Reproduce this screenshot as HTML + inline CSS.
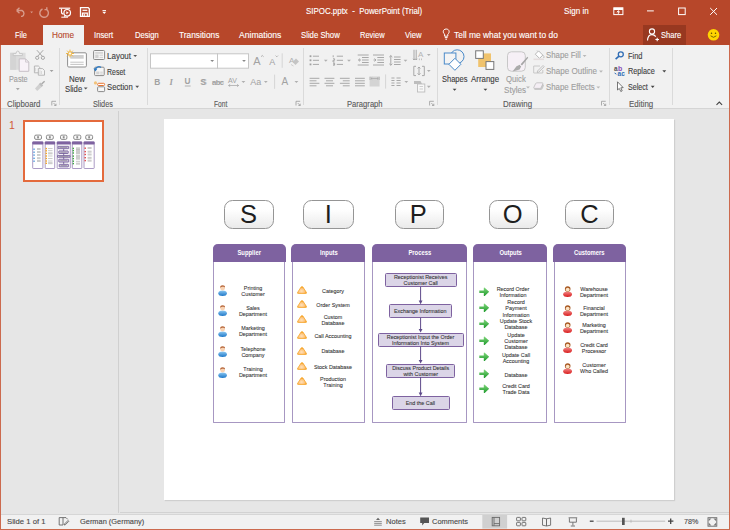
<!DOCTYPE html>
<html><head><meta charset="utf-8">
<style>
*{margin:0;padding:0;box-sizing:border-box}
html,body{width:730px;height:530px;overflow:hidden;background:#E6E6E6;font-family:"Liberation Sans",sans-serif;position:relative}
.a{position:absolute}
.t{position:absolute;line-height:1;white-space:pre;transform-origin:0 0;-webkit-text-stroke:0.12px currentColor}
#title{left:0;top:0;width:730px;height:45px;background:#B7472A}
#ribbon{left:1px;top:45px;width:728px;height:63px;background:#F1F1F1}
#rbline{left:1px;top:108px;width:728px;height:1px;background:#D5D5D5}
#divider{left:118px;top:111px;width:1px;height:402px;background:#D0D0D0}
#slide{left:164px;top:119px;width:510px;height:381px;background:#fff;box-shadow:1px 1px 1px #cfcfcf}
#status{left:1px;top:514px;width:728px;height:15px;background:#F1F1F1;border-top:1px solid #D6D6D6}
#bl{left:0;top:45px;width:1px;height:485px;background:#CC6A4E}
#br{left:729px;top:45px;width:1px;height:485px;background:#CC6A4E}
#bb{left:0;top:529px;width:730px;height:1px;background:#CC6A4E}
.w{color:#fff}
.tab{color:#fff;font-size:8.5px}
.rt{color:#444;font-size:8px}
.dis{color:#A8A8A8}
.gl{color:#666;font-size:8px}
.sep{position:absolute;width:1px;background:#DADADA}

.sc{position:absolute;left:0;top:0;width:510px;height:381px;font-family:"Liberation Sans",sans-serif}
.lb{position:absolute;top:80.9px;height:29.2px;border:1px solid #959595;border-radius:8.5px;background:linear-gradient(#FFFFFF 30%,#EAEAEA);font-size:25.5px;line-height:27.5px;text-align:center;color:#1E1E1E}
.col{position:absolute;top:124.7px;height:178.9px;border:1.2px solid #A797C2;border-top:none;border-radius:5px 5px 1px 1px}
.hd{position:absolute;left:-1.2px;right:-1.2px;top:0;height:18.3px;background:#7E62A0;border-radius:5px 5px 0 0;color:#fff;font-weight:bold;font-size:6.6px;line-height:18.3px;text-align:center}
.hd span{display:inline-block;transform:scaleX(0.89)}
.it{position:absolute;transform:translate(-50%,-50%) scaleX(0.9);text-align:center;font-size:6px;line-height:6.2px;color:#303030;white-space:nowrap;-webkit-text-stroke:0.08px #303030}
.ic{position:absolute;overflow:visible}
.pb2{position:absolute;background:#DBD5E7;border:1.2px solid #7E62A0;border-radius:1.5px;display:flex;align-items:center;justify-content:center;text-align:center;font-size:6px;line-height:6.1px;color:#303030;white-space:nowrap;-webkit-text-stroke:0.08px #303030}
.pb2 span{display:inline-block;transform:scaleX(0.9);position:relative;top:0.4px}
</style></head><body>
<div id="title" class="a"></div>
<div id="ribbon" class="a"></div>
<div id="rbline" class="a"></div>
<div id="divider" class="a"></div>

<svg width="0" height="0" style="position:absolute">
<defs>
 <linearGradient id="gb" x1="0" y1="0" x2="0" y2="1"><stop offset="0" stop-color="#8CC8F2"/><stop offset="1" stop-color="#1F78C8"/></linearGradient>
 <linearGradient id="gr" x1="0" y1="0" x2="0" y2="1"><stop offset="0" stop-color="#F28A8A"/><stop offset="1" stop-color="#D91E1E"/></linearGradient>
 <radialGradient id="gor" cx="0.45" cy="0.65" r="0.6"><stop offset="0" stop-color="#FFE2BC"/><stop offset="0.6" stop-color="#FDC27A"/><stop offset="1" stop-color="#F7A21B"/></radialGradient>
 <linearGradient id="go" x1="0" y1="0" x2="1" y2="0"><stop offset="0" stop-color="#F9B53A"/><stop offset="0.35" stop-color="#FDD3A6"/><stop offset="1" stop-color="#F7A418"/></linearGradient>
 <linearGradient id="gg" x1="0" y1="0" x2="0" y2="1"><stop offset="0" stop-color="#7FD67A"/><stop offset="1" stop-color="#1E9A2C"/></linearGradient>
 <symbol id="pb" viewBox="0 0 9.2 11.2">
  <path d="M0.3 8.3 C0.3 6.2 2 5.4 4.6 5.4 C7.2 5.4 8.9 6.2 8.9 8.3 C8.9 10.4 7.2 11 4.6 11 C2 11 0.3 10.4 0.3 8.3 Z" fill="url(#gb)"/>
  <circle cx="4.6" cy="2.9" r="2.5" fill="#F8D3B4"/>
  <path d="M2.1 2.8 C2 0.9 3.2 0.2 4.6 0.2 C6.2 0.2 7.2 1 7.1 2.6 C6.4 1.6 5 1.5 4.2 1.8 C3.3 2 2.6 2.3 2.1 2.8 Z" fill="#B86C42"/>
 </symbol>
 <symbol id="pr" viewBox="0 0 9.2 11">
  <path d="M0.2 8.2 C0.2 6.2 2 5.4 4.6 5.4 C7.2 5.4 9 6.2 9 8.2 C9 10.3 7.2 10.9 4.6 10.9 C2 10.9 0.2 10.3 0.2 8.2 Z" fill="url(#gr)"/>
  <circle cx="4.7" cy="3.1" r="2.8" fill="#A85A24"/>
  <circle cx="4.7" cy="3.6" r="1.9" fill="#FCE3C4"/>
 </symbol>
 <symbol id="tri" viewBox="0 0 10 7.4" preserveAspectRatio="none">
  <path d="M1.3 6.9 Q0.1 6.9 0.7 5.8 L3.9 1.2 Q5 -0.2 6.1 1.2 L9.3 5.8 Q9.9 6.9 8.7 6.9 Z" fill="url(#gor)" stroke="#F6A11E" stroke-width="0.7"/>
 </symbol>
 <symbol id="ga" viewBox="0 0 10.4 9.7">
  <path d="M0.3 3.6 H4.8 V1.2 Q4.8 0.2 5.7 0.8 L10.2 4.85 L5.7 8.9 Q4.8 9.5 4.8 8.5 V6.1 H0.3 Z" fill="url(#gg)"/>
 </symbol>
</defs>
</svg>
<div id="slide" class="a"><div class="sc"><div class="lb" style="left:60.3px;width:49.9px"><span style="position:relative;left:-0.8px">S</span></div>
<div class="lb" style="left:139.3px;width:50.4px"><span style="position:relative;left:-0.3px">I</span></div>
<div class="lb" style="left:231.4px;width:49.1px"><span style="position:relative;left:-1.6px">P</span></div>
<div class="lb" style="left:324.6px;width:49.5px"><span style="position:relative;left:-0.7px">O</span></div>
<div class="lb" style="left:400.9px;width:49.3px"><span style="position:relative;left:-0.2px">C</span></div>
<div class="col" style="left:48.7px;width:72.8px"><div class="hd"><span>Supplier</span></div></div>
<div class="col" style="left:127.6px;width:73.6px"><div class="hd"><span>Inputs</span></div></div>
<div class="col" style="left:208px;width:95.2px"><div class="hd"><span>Process</span></div></div>
<div class="col" style="left:309.4px;width:73.6px"><div class="hd"><span>Outputs</span></div></div>
<div class="col" style="left:389.5px;width:72.0px"><div class="hd"><span>Customers</span></div></div>
<svg class="ic" style="left:54.1px;top:165.9px" width="9.2" height="11.2"><use href="#pb"/></svg>
<div class="it" style="left:88.8px;top:171.50px">Printing<br>Customer</div>
<svg class="ic" style="left:54.1px;top:186.1px" width="9.2" height="11.2"><use href="#pb"/></svg>
<div class="it" style="left:88.8px;top:191.70px">Sales<br>Department</div>
<svg class="ic" style="left:54.1px;top:206.6px" width="9.2" height="11.2"><use href="#pb"/></svg>
<div class="it" style="left:88.8px;top:212.20px">Marketing<br>Department</div>
<svg class="ic" style="left:54.1px;top:227.4px" width="9.2" height="11.2"><use href="#pb"/></svg>
<div class="it" style="left:88.8px;top:233.00px">Telephone<br>Company</div>
<svg class="ic" style="left:54.1px;top:247.6px" width="9.2" height="11.2"><use href="#pb"/></svg>
<div class="it" style="left:88.8px;top:253.20px">Training<br>Department</div>
<svg class="ic" style="left:133.1px;top:166.80px" width="10" height="8"><use href="#tri"/></svg>
<div class="it" style="left:169px;top:171.50px">Category</div>
<svg class="ic" style="left:133.1px;top:181.20px" width="10" height="8"><use href="#tri"/></svg>
<div class="it" style="left:169px;top:185.90px">Order System</div>
<svg class="ic" style="left:133.1px;top:196.30px" width="10" height="8"><use href="#tri"/></svg>
<div class="it" style="left:169px;top:201.00px">Custom<br>Database</div>
<svg class="ic" style="left:133.1px;top:212.30px" width="10" height="8"><use href="#tri"/></svg>
<div class="it" style="left:169px;top:217.00px">Call Accounting</div>
<svg class="ic" style="left:133.1px;top:227.70px" width="10" height="8"><use href="#tri"/></svg>
<div class="it" style="left:169px;top:232.40px">Database</div>
<svg class="ic" style="left:133.1px;top:243.10px" width="10" height="8"><use href="#tri"/></svg>
<div class="it" style="left:169px;top:247.80px">Stock Database</div>
<svg class="ic" style="left:133.1px;top:258.20px" width="10" height="8"><use href="#tri"/></svg>
<div class="it" style="left:169px;top:262.90px">Production<br>Training</div>
<div class="pb2" style="left:220.6px;top:154.4px;width:72.1px;height:13.4px"><span>Receptionist Receives<br>Customer Call</span></div>
<div class="pb2" style="left:224.8px;top:185.2px;width:63.2px;height:13.6px"><span>Exchange Information</span></div>
<div class="pb2" style="left:213.7px;top:213.5px;width:86.0px;height:14.6px"><span>Receptionist Input the Order<br>Information Into System</span></div>
<div class="pb2" style="left:222.1px;top:244.6px;width:68.7px;height:14.2px"><span>Discuss Product Details<br>with Customer</span></div>
<div class="pb2" style="left:227.5px;top:277.2px;width:58.5px;height:13.4px"><span>End the Call</span></div>
<svg class="ic" style="left:0;top:0" width="510" height="381"><path d="M256.6 167.8 V182.2" stroke="#5E4A8A" stroke-width="1"/><path d="M254.7 181.6 H258.5 L256.6 185.2 Z" fill="#5E4A8A"/><path d="M256.6 198.8 V210.5" stroke="#5E4A8A" stroke-width="1"/><path d="M254.7 209.9 H258.5 L256.6 213.5 Z" fill="#5E4A8A"/><path d="M256.6 227.4 V241.6" stroke="#5E4A8A" stroke-width="1"/><path d="M254.7 241.0 H258.5 L256.6 244.6 Z" fill="#5E4A8A"/><path d="M256.6 258 V274.2" stroke="#5E4A8A" stroke-width="1"/><path d="M254.7 273.59999999999997 H258.5 L256.6 277.2 Z" fill="#5E4A8A"/></svg>
<svg class="ic" style="left:314.7px;top:168.2px" width="10.4" height="9.7"><use href="#ga"/></svg>
<svg class="ic" style="left:314.7px;top:183.7px" width="10.4" height="9.7"><use href="#ga"/></svg>
<svg class="ic" style="left:314.7px;top:199.7px" width="10.4" height="9.7"><use href="#ga"/></svg>
<svg class="ic" style="left:314.7px;top:217.0px" width="10.4" height="9.7"><use href="#ga"/></svg>
<svg class="ic" style="left:314.7px;top:233.1px" width="10.4" height="9.7"><use href="#ga"/></svg>
<svg class="ic" style="left:314.7px;top:250.1px" width="10.4" height="9.7"><use href="#ga"/></svg>
<svg class="ic" style="left:314.7px;top:265.4px" width="10.4" height="9.7"><use href="#ga"/></svg>
<div class="it" style="left:348.9px;top:172.80px">Record Order<br>Information</div>
<div class="it" style="left:351.5px;top:189.10px">Record<br>Payment<br>Information</div>
<div class="it" style="left:351.5px;top:205.10px">Update Stock<br>Database</div>
<div class="it" style="left:351.5px;top:221.80px">Update<br>Customer<br>Database</div>
<div class="it" style="left:351.5px;top:239.00px">Update Call<br>Accounting</div>
<div class="it" style="left:351.5px;top:255.50px">Database</div>
<div class="it" style="left:351.5px;top:270.10px">Credit Card<br>Trade Data</div>
<svg class="ic" style="left:398.8px;top:167.1px" width="9.2" height="11"><use href="#pr"/></svg>
<svg class="ic" style="left:398.8px;top:185.79999999999998px" width="9.2" height="11"><use href="#pr"/></svg>
<svg class="ic" style="left:398.8px;top:203.4px" width="9.2" height="11"><use href="#pr"/></svg>
<svg class="ic" style="left:398.8px;top:222.7px" width="9.2" height="11"><use href="#pr"/></svg>
<svg class="ic" style="left:398.8px;top:243.5px" width="9.2" height="11"><use href="#pr"/></svg>
<div class="it" style="left:430px;top:172.80px">Warehouse<br>Department</div>
<div class="it" style="left:430px;top:192.00px">Financial<br>Department</div>
<div class="it" style="left:430px;top:209.20px">Marketing<br>Department</div>
<div class="it" style="left:430px;top:228.60px">Credit Card<br>Processor</div>
<div class="it" style="left:430px;top:249.10px">Customer<br>Who Called</div></div></div>
<div class="a" style="left:22.6px;top:120.3px;width:81.2px;height:62.1px;border:2px solid #E46A3C;background:#fff"></div>
<svg class="a" style="left:0;top:110px" width="118" height="80" viewBox="0 110 118 80">
<rect x="34.6" y="135.1" width="6.90" height="4.3" rx="1.4" fill="#FAFAFA" stroke="#6A6A6A" stroke-width="0.75"/>
<rect x="37.15" y="136.2" width="1.8" height="2.2" fill="#444" opacity="0.6"/>
<rect x="46.4" y="135.1" width="6.90" height="4.3" rx="1.4" fill="#FAFAFA" stroke="#6A6A6A" stroke-width="0.75"/>
<rect x="48.95" y="136.2" width="1.8" height="2.2" fill="#444" opacity="0.6"/>
<rect x="60.5" y="135.1" width="6.40" height="4.3" rx="1.4" fill="#FAFAFA" stroke="#6A6A6A" stroke-width="0.75"/>
<rect x="62.80" y="136.2" width="1.8" height="2.2" fill="#444" opacity="0.6"/>
<rect x="73.7" y="135.1" width="7.10" height="4.3" rx="1.4" fill="#FAFAFA" stroke="#6A6A6A" stroke-width="0.75"/>
<rect x="76.35" y="136.2" width="1.8" height="2.2" fill="#444" opacity="0.6"/>
<rect x="85.7" y="135.1" width="6.90" height="4.3" rx="1.4" fill="#FAFAFA" stroke="#6A6A6A" stroke-width="0.75"/>
<rect x="88.25" y="136.2" width="1.8" height="2.2" fill="#444" opacity="0.6"/>
<rect x="32.70" y="142" width="10.20" height="26.5" rx="0.6" fill="#fff" stroke="#9582B6" stroke-width="0.8"/>
<rect x="32.3" y="141.4" width="11.00" height="3" rx="0.7" fill="#7E62A0"/>
<rect x="45.20" y="142" width="9.50" height="26.5" rx="0.6" fill="#fff" stroke="#9582B6" stroke-width="0.8"/>
<rect x="44.8" y="141.4" width="10.30" height="3" rx="0.7" fill="#7E62A0"/>
<rect x="57.20" y="142" width="13.10" height="26.5" rx="0.6" fill="#fff" stroke="#9582B6" stroke-width="0.8"/>
<rect x="56.8" y="141.4" width="13.90" height="3" rx="0.7" fill="#7E62A0"/>
<rect x="72.30" y="142" width="9.50" height="26.5" rx="0.6" fill="#fff" stroke="#9582B6" stroke-width="0.8"/>
<rect x="71.9" y="141.4" width="10.30" height="3" rx="0.7" fill="#7E62A0"/>
<rect x="84.00" y="142" width="10.20" height="26.5" rx="0.6" fill="#fff" stroke="#9582B6" stroke-width="0.8"/>
<rect x="83.6" y="141.4" width="11.00" height="3" rx="0.7" fill="#7E62A0"/>
<path d="M63.7 148.5 V164.5" stroke="#6B5394" stroke-width="0.8"/>
<rect x="58" y="146.3" width="10.70" height="2.40" rx="0.3" fill="#CFC5DF" stroke="#6B5394" stroke-width="0.8"/>
<rect x="59.50" y="147.10" width="7.70" height="0.8" fill="#666" opacity="0.5"/>
<rect x="58.8" y="150.9" width="9.40" height="2.60" rx="0.3" fill="#CFC5DF" stroke="#6B5394" stroke-width="0.8"/>
<rect x="60.30" y="151.80" width="6.40" height="0.8" fill="#666" opacity="0.5"/>
<rect x="57.5" y="155.4" width="12.50" height="1.90" rx="0.3" fill="#CFC5DF" stroke="#6B5394" stroke-width="0.8"/>
<rect x="59.00" y="155.95" width="9.50" height="0.8" fill="#666" opacity="0.5"/>
<rect x="58.8" y="159.2" width="9.90" height="2.90" rx="0.3" fill="#CFC5DF" stroke="#6B5394" stroke-width="0.8"/>
<rect x="60.30" y="160.25" width="6.90" height="0.8" fill="#666" opacity="0.5"/>
<rect x="59.2" y="164.3" width="9.20" height="2.60" rx="0.3" fill="#CFC5DF" stroke="#6B5394" stroke-width="0.8"/>
<rect x="60.70" y="165.20" width="6.20" height="0.8" fill="#666" opacity="0.5"/>
<rect x="33.4" y="148.5" width="1.3" height="1.4" fill="#3F8FD8"/>
<rect x="37.00" y="148.40" width="3.60" height="0.6" fill="#707070" opacity="0.6"/>
<rect x="37.00" y="149.40" width="3.60" height="0.6" fill="#707070" opacity="0.6"/>
<rect x="33.4" y="151.5" width="1.3" height="1.4" fill="#3F8FD8"/>
<rect x="37.00" y="151.40" width="3.60" height="0.6" fill="#707070" opacity="0.6"/>
<rect x="37.00" y="152.40" width="3.60" height="0.6" fill="#707070" opacity="0.6"/>
<rect x="33.4" y="154.4" width="1.3" height="1.4" fill="#3F8FD8"/>
<rect x="37.00" y="154.30" width="3.60" height="0.6" fill="#707070" opacity="0.6"/>
<rect x="37.00" y="155.30" width="3.60" height="0.6" fill="#707070" opacity="0.6"/>
<rect x="33.4" y="157.60000000000002" width="1.3" height="1.4" fill="#3F8FD8"/>
<rect x="37.00" y="157.50" width="3.60" height="0.6" fill="#707070" opacity="0.6"/>
<rect x="37.00" y="158.50" width="3.60" height="0.6" fill="#707070" opacity="0.6"/>
<rect x="33.4" y="160.5" width="1.3" height="1.4" fill="#3F8FD8"/>
<rect x="37.00" y="160.40" width="3.60" height="0.6" fill="#707070" opacity="0.6"/>
<rect x="37.00" y="161.40" width="3.60" height="0.6" fill="#707070" opacity="0.6"/>
<rect x="45.5" y="147.9" width="1.5" height="1.4" fill="#F5A623"/>
<rect x="48.05" y="148.30" width="4.50" height="0.6" fill="#707070" opacity="0.6"/>
<rect x="45.5" y="150.10000000000002" width="1.5" height="1.4" fill="#F5A623"/>
<rect x="48.05" y="150.50" width="4.50" height="0.6" fill="#707070" opacity="0.6"/>
<rect x="45.5" y="152.70000000000002" width="1.5" height="1.4" fill="#F5A623"/>
<rect x="48.05" y="152.60" width="4.50" height="0.6" fill="#707070" opacity="0.6"/>
<rect x="48.05" y="153.60" width="4.50" height="0.6" fill="#707070" opacity="0.6"/>
<rect x="45.5" y="155.3" width="1.5" height="1.4" fill="#F5A623"/>
<rect x="48.05" y="155.70" width="4.50" height="0.6" fill="#707070" opacity="0.6"/>
<rect x="45.5" y="157.8" width="1.5" height="1.4" fill="#F5A623"/>
<rect x="48.05" y="158.20" width="4.50" height="0.6" fill="#707070" opacity="0.6"/>
<rect x="45.5" y="160.3" width="1.5" height="1.4" fill="#F5A623"/>
<rect x="48.05" y="160.70" width="4.50" height="0.6" fill="#707070" opacity="0.6"/>
<rect x="45.5" y="162.60000000000002" width="1.5" height="1.4" fill="#F5A623"/>
<rect x="48.05" y="162.50" width="4.50" height="0.6" fill="#707070" opacity="0.6"/>
<rect x="48.05" y="163.50" width="4.50" height="0.6" fill="#707070" opacity="0.6"/>
<rect x="72.6" y="147.70000000000002" width="1.4" height="1.4" fill="#3DAA3F"/>
<rect x="76.00" y="147.60" width="4.00" height="0.6" fill="#707070" opacity="0.6"/>
<rect x="76.00" y="148.60" width="4.00" height="0.6" fill="#707070" opacity="0.6"/>
<rect x="72.6" y="149.9" width="1.4" height="1.4" fill="#3DAA3F"/>
<rect x="76.00" y="149.30" width="4.00" height="0.6" fill="#707070" opacity="0.6"/>
<rect x="76.00" y="150.30" width="4.00" height="0.6" fill="#707070" opacity="0.6"/>
<rect x="76.00" y="151.30" width="4.00" height="0.6" fill="#707070" opacity="0.6"/>
<rect x="72.6" y="152.3" width="1.4" height="1.4" fill="#3DAA3F"/>
<rect x="76.00" y="152.20" width="4.00" height="0.6" fill="#707070" opacity="0.6"/>
<rect x="76.00" y="153.20" width="4.00" height="0.6" fill="#707070" opacity="0.6"/>
<rect x="72.6" y="155.4" width="1.4" height="1.4" fill="#3DAA3F"/>
<rect x="76.00" y="154.80" width="4.00" height="0.6" fill="#707070" opacity="0.6"/>
<rect x="76.00" y="155.80" width="4.00" height="0.6" fill="#707070" opacity="0.6"/>
<rect x="76.00" y="156.80" width="4.00" height="0.6" fill="#707070" opacity="0.6"/>
<rect x="72.6" y="157.9" width="1.4" height="1.4" fill="#3DAA3F"/>
<rect x="76.00" y="157.80" width="4.00" height="0.6" fill="#707070" opacity="0.6"/>
<rect x="76.00" y="158.80" width="4.00" height="0.6" fill="#707070" opacity="0.6"/>
<rect x="72.6" y="160.5" width="1.4" height="1.4" fill="#3DAA3F"/>
<rect x="76.00" y="160.90" width="4.00" height="0.6" fill="#707070" opacity="0.6"/>
<rect x="72.6" y="162.9" width="1.4" height="1.4" fill="#3DAA3F"/>
<rect x="76.00" y="162.80" width="4.00" height="0.6" fill="#707070" opacity="0.6"/>
<rect x="76.00" y="163.80" width="4.00" height="0.6" fill="#707070" opacity="0.6"/>
<rect x="84.5" y="147.5" width="1.4" height="1.4" fill="#E04040"/>
<rect x="87.60" y="147.40" width="4.00" height="0.6" fill="#707070" opacity="0.6"/>
<rect x="87.60" y="148.40" width="4.00" height="0.6" fill="#707070" opacity="0.6"/>
<rect x="84.5" y="150.9" width="1.4" height="1.4" fill="#E04040"/>
<rect x="87.60" y="150.80" width="4.00" height="0.6" fill="#707070" opacity="0.6"/>
<rect x="87.60" y="151.80" width="4.00" height="0.6" fill="#707070" opacity="0.6"/>
<rect x="84.5" y="153.8" width="1.4" height="1.4" fill="#E04040"/>
<rect x="87.60" y="153.70" width="4.00" height="0.6" fill="#707070" opacity="0.6"/>
<rect x="87.60" y="154.70" width="4.00" height="0.6" fill="#707070" opacity="0.6"/>
<rect x="84.5" y="157.0" width="1.4" height="1.4" fill="#E04040"/>
<rect x="87.60" y="156.90" width="4.00" height="0.6" fill="#707070" opacity="0.6"/>
<rect x="87.60" y="157.90" width="4.00" height="0.6" fill="#707070" opacity="0.6"/>
<rect x="84.5" y="159.9" width="1.4" height="1.4" fill="#E04040"/>
<rect x="87.60" y="159.80" width="4.00" height="0.6" fill="#707070" opacity="0.6"/>
<rect x="87.60" y="160.80" width="4.00" height="0.6" fill="#707070" opacity="0.6"/>
</svg>
<div class="a" style="left:120px;top:512px;width:609px;height:1px;background:#D2D2D2"></div>
<div id="status" class="a"></div>

<!-- title bar text -->
<!-- tabs -->
<div class="a" style="left:43px;top:25px;width:41px;height:20px;background:#F1F1F1"></div>
<div class="a" style="left:643px;top:25px;width:43px;height:20px;background:#983820"></div>

<!-- ribbon separators -->
<div class="sep" style="left:59px;top:48px;height:57px"></div>
<div class="sep" style="left:147px;top:48px;height:57px"></div>
<div class="sep" style="left:303px;top:48px;height:57px"></div>
<div class="sep" style="left:437px;top:48px;height:57px"></div>
<div class="sep" style="left:609px;top:48px;height:57px"></div>
<div class="sep" style="left:672px;top:48px;height:57px"></div>

<!-- group labels -->

<!-- clipboard -->
<!-- slides -->
<!-- drawing -->
<!-- editing -->

<!-- status -->



<svg class="a" style="left:0;top:0" width="730" height="530" viewBox="0 0 730 530">
<g fill="none" stroke="#fff" stroke-width="1.2">
 <!-- undo disabled -->
 <g opacity="0.45" stroke-width="1.4">
  <path d="M16.5 10.5 L19.5 7.8 M16.5 10.5 L19.5 13.2 M16.5 10.5 H22 A3.2 3.2 0 0 1 22 16.4 H21"/>
  <path d="M30.2 11.6 L33 11.6 L31.6 13.2 Z" fill="#fff" stroke="none"/>
  <path d="M42.5 9 A4.3 4.3 0 1 0 46.8 9.6 M46.8 9.6 V7.3 M46.8 9.6 H44.5"/>
 </g>
 <!-- present from start -->
 <path d="M59 8.2 H70.2" stroke-width="1.2"/>
 <path d="M61.5 8.7 V12 A2 2 0 0 0 63.5 14"/>
 <circle cx="67.2" cy="12.8" r="3.3"/>
 <path d="M66.3 11.3 L68.7 12.8 L66.3 14.3 Z" fill="#fff" stroke="none"/>
 <path d="M61.3 17.2 H68 M64.6 16.2 V17.2" stroke-width="1"/>
 <!-- save -->
 <path d="M80.5 7.6 H88.2 L89.3 8.7 V16.4 H80.5 Z" stroke-width="1.3"/>
 <path d="M82.5 10.3 H87.3" stroke-width="1.2"/>
 <path d="M82.5 16.4 V13.2 H87.3 V16.4" stroke-width="1.2"/>
 <rect x="83.6" y="14.2" width="1.5" height="1.6" fill="#fff" stroke="none"/>
 <!-- customize -->
 <path d="M102.5 10.5 H106" stroke-width="0.9"/>
 <path d="M102.3 11.8 H106.2 L104.25 14 Z" fill="#fff" stroke="none"/>
 <!-- ribbon display -->
 <rect x="613.8" y="7.8" width="9.1" height="6.8" stroke-width="1"/>
 <rect x="613.8" y="7.8" width="9.1" height="2.2" fill="#fff" stroke="none"/>
 <path d="M618.35 10.8 V13.8 M616.8 12.3 L618.35 10.8 L619.9 12.3" stroke-width="1"/>
 <!-- min max close -->
 <path d="M647 10.9 H653.8" stroke-width="1"/>
 <rect x="678.6" y="8" width="6.6" height="6.6" stroke-width="1"/>
 <path d="M710.2 8 L717 14.8 M717 8 L710.2 14.8" stroke-width="1"/>
 <!-- lightbulb -->
 <path d="M444.6 36.2 V34.2 C442.6 32.8 442.6 29.2 446.2 29 C449.8 29.2 449.8 32.8 447.8 34.2 V36.2 Z" stroke-width="1"/>
 <path d="M444.8 37.6 H447.6 M445.4 39.2 H447" stroke-width="1"/>
 <!-- share person -->
 <circle cx="652" cy="31.5" r="2.6" stroke-width="1.1"/>
 <path d="M647.5 40.5 C647.8 36.5 649.5 34.6 652 34.6 C653.8 34.6 655 35.4 655.8 36.6" stroke-width="1.1"/>
 <path d="M655.4 39.5 H659 M657.2 37.7 V41.3" stroke-width="1.1"/>
</g>
<!-- smiley -->
<circle cx="713.5" cy="34.8" r="5.8" fill="#FFD600"/>
<circle cx="711.5" cy="33.3" r="0.75" fill="#5a4a00"/>
<circle cx="715.5" cy="33.3" r="0.75" fill="#5a4a00"/>
<path d="M710.6 35.8 Q713.5 38.8 716.4 35.8" fill="none" stroke="#5a4a00" stroke-width="0.8"/>
</svg>


<svg class="a" style="left:0;top:0" width="730" height="530" viewBox="0 0 730 530">
<!-- CLIPBOARD -->
<rect x="10.2" y="52.8" width="15.4" height="17" fill="#DCDCDC"/>
<rect x="10.2" y="52.8" width="6" height="17" fill="#D4D4D4"/>
<path d="M13.2 55.6 V53.6 H16 Q16.2 51 17.8 51 Q19.4 51 19.6 53.6 H22.4 V55.6 Z" fill="#F2F2F2" stroke="#C4C4C4" stroke-width="0.9"/>
<path d="M19.2 58.9 H25.6 L28.8 62.1 V71.3 H19.2 Z" fill="#F8F2F8" stroke="#C6C0C6" stroke-width="1"/>
<path d="M25.6 58.9 V62.1 H28.8" fill="none" stroke="#C6C0C6" stroke-width="0.8"/>
<g fill="none" stroke="#A8A8A8" stroke-width="1">
 <path d="M36.9 50.2 L42.6 56.6 M43.2 50.2 L37.4 56.6"/>
 <circle cx="37.2" cy="57.8" r="1.6"/><circle cx="42.9" cy="57.8" r="1.6"/>
</g>
<g fill="#F4F4F4" stroke="#B0B0B0" stroke-width="0.9">
 <path d="M34.4 66 H38.4 L39.8 67.4 V72.8 H34.4 Z"/>
 <path d="M38.3 68.6 H42.6 L44.5 70.5 V75.2 H38.3 Z"/>
</g>
<path d="M35.6 67.8 V71.5 M40 70.3 V74 M41.5 71 V74" stroke="#C8C8C8" stroke-width="0.6"/>
<path d="M49.70 69.90 H53.50 L51.60 72.00 Z" fill="#A0A0A0"/>
<path d="M35 88.6 L38.8 84.2 L41.6 87 L37.2 91 Z" fill="#D0D0D0"/>
<path d="M38.8 84.2 L40.3 82.6 L43.2 85.4 L41.6 87 Z" fill="#BDBDBD"/>
<path d="M41.6 84 L44.6 81.2" stroke="#A8A8A8" stroke-width="1.4"/>
<path d="M15.90 88.10 H19.70 L17.80 90.20 Z" fill="#A8A8A8"/>
<!-- dialog launchers -->
<g fill="none" stroke="#9A9A9A" stroke-width="0.8">
 <path d="M51.8 105.5 V101.3 H56 M53.5 103 L56 105.5 M56 103.7 V105.5 H54.2"/>
 <path d="M296 105.5 V101.3 H300.2 M297.7 103 L300.2 105.5 M300.2 103.7 V105.5 H298.4"/>
 <path d="M429.6 105.5 V101.3 H433.8 M431.3 103 L433.8 105.5 M433.8 103.7 V105.5 H432"/>
 <path d="M601.5 105.5 V101.3 H605.7 M603.2 103 L605.7 105.5 M605.7 103.7 V105.5 H603.9"/>
</g>
<!-- SLIDES -->
<rect x="67.6" y="52.8" width="18.8" height="14.2" rx="1.2" fill="#fff" stroke="#8E8E8E" stroke-width="1"/>
<rect x="70.3" y="55" width="13.4" height="3.7" fill="#CFCFCF"/>
<path d="M70.3 62.2 H83.7 M70.3 64.4 H83.7" stroke="#B5B5B5" stroke-width="0.8"/>
<g stroke="#F0B43C" stroke-width="1">
 <path d="M70 49.6 V57.4 M66.1 53.5 H73.9 M67.2 50.7 L72.8 56.3 M72.8 50.7 L67.2 56.3"/>
</g>
<circle cx="70" cy="53.5" r="1.7" fill="#F8F8F8" stroke="#F0B43C" stroke-width="0.9"/>
<path d="M83.80 87.50 H87.60 L85.70 89.60 Z" fill="#555"/>
<!-- layout icon -->
<rect x="93.6" y="50.5" width="11" height="9" rx="1" fill="#F6F6F6" stroke="#8A8A8A" stroke-width="1"/>
<rect x="95.2" y="52.1" width="7.8" height="1.6" fill="#D2D2D2"/>
<rect x="95.2" y="54.5" width="3.4" height="3.6" fill="#D2D2D2"/>
<path d="M99.6 55.2 H103 M99.6 57.4 H103" stroke="#C4C4C4" stroke-width="0.8"/>
<!-- reset icon -->
<rect x="94.6" y="67.2" width="9.6" height="8.4" rx="1" fill="#F6F6F6" stroke="#8A8A8A" stroke-width="1"/>
<rect x="96.2" y="71.5" width="3.2" height="2.8" fill="#D2D2D2"/>
<path d="M100.2 72.2 H102.8 M100.2 74 H102.8" stroke="#C4C4C4" stroke-width="0.8"/>
<path d="M95.2 70 C95.6 67.2 98.6 65.8 101 67.4" fill="none" stroke="#2F7BC4" stroke-width="1.3"/>
<path d="M93.4 68.6 L95.4 71.6 L97.4 68.8 Z" fill="#2F7BC4"/>
<!-- section icon -->
<circle cx="95.5" cy="82.9" r="1.6" fill="#F2C27A"/>
<rect x="97.6" y="83.3" width="7" height="2.2" rx="1" fill="#fff" stroke="#E8742F" stroke-width="1"/>
<rect x="97.6" y="86.8" width="7" height="4.8" rx="0.8" fill="#F6F6F6" stroke="#8A8A8A" stroke-width="1"/>
<path d="M133.30 55.00 H137.10 L135.20 57.10 Z" fill="#555"/>
<path d="M135.30 85.80 H139.10 L137.20 87.90 Z" fill="#555"/>
<!-- FONT -->
<rect x="150.5" y="53.8" width="67" height="14.4" fill="#fff" stroke="#C6C6C6" stroke-width="1"/>
<rect x="217.5" y="53.8" width="31" height="14.4" fill="#fff" stroke="#C6C6C6" stroke-width="1"/>
<path d="M210.30 59.90 H214.10 L212.20 62.00 Z" fill="#8A8A8A"/>
<path d="M242.10 59.90 H245.90 L244.00 62.00 Z" fill="#8A8A8A"/>
<g font-family="Liberation Sans" fill="#A2A2A2">
 <text x="253.3" y="64.7" font-size="11">A</text>
 <text x="269.2" y="64.7" font-size="9">A</text>
 <text x="154.2" y="84.6" font-size="8.4" font-weight="bold">B</text>
 <text x="169.6" y="84.6" font-size="8.6" font-style="italic" font-weight="bold" font-family="Liberation Serif">I</text>
 <text x="184.6" y="84.4" font-size="8.2" font-weight="bold">U</text>
 <text x="201.2" y="85.4" font-size="8.6" font-weight="bold" fill="#C8C8C8">S</text>
 <text x="200.3" y="84.6" font-size="8.6" font-weight="bold">S</text>
 <text x="212" y="84.6" font-size="7.6" font-weight="bold" letter-spacing="-0.5">abc</text>
 <text x="228" y="82.5" font-size="7">AV</text>
 <text x="250.3" y="84.5" font-size="9">Aa</text>
 <text x="281.4" y="85" font-size="10">A</text>
</g>
<path d="M261 56.7 L262.3 55.5 L263.6 56.7" fill="none" stroke="#A2A2A2" stroke-width="0.8"/>
<path d="M275.6 55.6 L276.8 56.8 L278 55.6" fill="none" stroke="#A2A2A2" stroke-width="0.8"/>
<path d="M184.8 86 H190.6" stroke="#A2A2A2" stroke-width="0.8"/><path d="M212 82 H223.5" stroke="#A2A2A2" stroke-width="0.6"/>
<path d="M228.6 85.5 H238.6 M228.6 85.5 L230.2 84.3 M228.6 85.5 L230.2 86.7 M238.6 85.5 L237 84.3 M238.6 85.5 L237 86.7" fill="none" stroke="#A2A2A2" stroke-width="0.7"/>
<g fill="#B0B0B0">
 <path d="M241.50 81.00 H245.30 L243.40 83.10 Z"/>
 <path d="M263.90 81.00 H267.70 L265.80 83.10 Z"/>
 <path d="M294.50 81.00 H298.30 L296.40 83.10 Z"/>
</g>
<path d="M282.2 53.3 V67.8 M274.6 74.6 V88.8" stroke="#D5D5D5" stroke-width="1"/>
<text x="289" y="62.5" font-size="8" font-family="Liberation Sans" fill="#B0B0B0">A</text>
<path d="M292.5 62 L296 58.5 L299 61.5 L295.5 65 Z" fill="#C4C4C4"/>
<path d="M291 64.5 L293.5 66" stroke="#C4C4C4" stroke-width="0.8"/>
<!-- PARAGRAPH -->
<g fill="#A0A0A0">
 <rect x="309.6" y="55.3" width="1.8" height="1.8"/><rect x="309.6" y="59.4" width="1.8" height="1.8"/><rect x="309.6" y="63.5" width="1.8" height="1.8"/>
</g>
<g stroke="#A8A8A8" stroke-width="1" fill="none">
 <path d="M312.9 56.2 H319 M312.9 60.3 H319 M312.9 64.4 H319"/>
 <path d="M336.8 56.2 H343 M336.8 60.3 H343 M336.8 64.4 H343"/>
 <path d="M333.2 55.3 V57.2 M333 58.8 H334.6 V60.3 H333 V61.9 H334.6 M333 63.2 H334.6 V65.2 H333 M333.2 64.2 H334.6"/>
 <path d="M357.7 55 H368.7 M362 57.5 H368.7 M362 60 H368.7 M362 62.5 H368.7 M357.7 65 H368.7"/>
 <path d="M358.5 60 H361 M358.5 60 L360 58.6 M358.5 60 L360 61.4"/>
 <path d="M373 55 H384 M377.3 57.5 H384 M377.3 60 H384 M377.3 62.5 H384 M373 65 H384"/>
 <path d="M373.5 60 H376 M376 60 L374.5 58.6 M376 60 L374.5 61.4"/>
 <path d="M390.8 55.6 V65.2 M389.3 57 L390.8 55.6 L392.3 57 M389.3 63.8 L390.8 65.2 L392.3 63.8"/>
 <path d="M394 57 H400.6 M394 59.5 H400.6 M394 62 H400.6 M394 64.5 H400.6"/>
 <path d="M309.6 78.3 H319.4 M309.6 80.8 H316.5 M309.6 83.3 H319.4 M309.6 85.8 H316.5"/>
 <path d="M324.5 78.3 H334.4 M326 80.8 H333 M324.5 83.3 H334.4 M326 85.8 H333"/>
 <path d="M339.9 78.3 H349.7 M342.8 80.8 H349.7 M339.9 83.3 H349.7 M342.8 85.8 H349.7"/>
 <path d="M355 78.3 H364.8 M355 80.8 H364.8 M355 83.3 H364.8 M355 85.8 H364.8"/>
 <path d="M391.4 78 H394.5 M396.5 78 H400.6 M391.4 80.5 H394.5 M396.5 80.5 H400.6 M391.4 83 H394.5 M396.5 83 H400.6 M391.4 85.5 H394.5 M396.5 85.5 H400.6"/>
 <path d="M414 49.8 V60 M416.2 49.8 V60 M413 58.8 L414 60 L415 58.8 M415.2 58.8 L416.2 60 L417.2 58.8"/>
 <path d="M413.8 66.3 H416 M413.8 66.3 V75.6 H416 M424.3 66.3 H422 M424.3 66.3 V75.6 H422 M419 67 V74.8 M417.6 68.4 L419 67 L420.4 68.4 M417.6 73.4 L419 74.8 L420.4 73.4"/>
</g>
<text x="418" y="57" font-size="8" font-family="Liberation Sans" fill="#B4B4B4">A</text>
<path d="M419.4 58.5 V60.2 M421.5 58.5 V60.2" stroke="#B4B4B4" stroke-width="0.8"/>
<rect x="369.6" y="76.5" width="10" height="10" fill="#D4D4D4"/>
<path d="M371 78.5 H378.2 M371 78.5 L372.2 77.5 M371 78.5 L372.2 79.5 M378.2 78.5 L377 77.5 M378.2 78.5 L377 79.5 M370 76.8 V80 M379.2 76.8 V80" stroke="#A8A8A8" stroke-width="0.7" fill="none"/>
<path d="M414 81 H420.5 L422 84 H414 Z" fill="#BDBDBD"/>
<rect x="417.5" y="84" width="7.3" height="8" fill="#F8F8F8" stroke="#BDBDBD" stroke-width="0.9"/>
<path d="M419.5 86.5 H423 M419.5 89 H423" stroke="#BDBDBD" stroke-width="0.7"/>
<g fill="#B0B0B0">
 <path d="M323.90 59.70 H327.70 L325.80 61.80 Z"/>
 <path d="M347.10 59.70 H350.90 L349.00 61.80 Z"/>
 <path d="M403.60 59.70 H407.40 L405.50 61.80 Z"/>
 <path d="M404.40 80.90 H408.20 L406.30 83.00 Z"/>
 <path d="M426.90 53.90 H430.70 L428.80 56.00 Z"/>
 <path d="M426.90 69.90 H430.70 L428.80 72.00 Z"/>
 <path d="M426.90 85.80 H430.70 L428.80 87.90 Z"/>
</g>
<path d="M385.6 74.4 V88.6" stroke="#D5D5D5" stroke-width="1"/>
<!-- DRAWING -->
<circle cx="457.2" cy="56.6" r="6.8" fill="none" stroke="#4A8AC9" stroke-width="1"/>
<rect x="444.3" y="53" width="11.6" height="11" fill="#F4F4F4" stroke="#4A8AC9" stroke-width="1"/>
<path d="M454.9 58.3 L460.9 64.3 L454.9 70.3 L448.9 64.3 Z" fill="#fff" stroke="#4A8AC9" stroke-width="1"/>
<path d="M452.70 88.70 H456.50 L454.60 90.80 Z" fill="#444"/>
<rect x="478.2" y="53.4" width="12.8" height="13.6" fill="#F0C36D"/>
<rect x="475.7" y="50.8" width="7.6" height="7.6" fill="#fff" stroke="#767676" stroke-width="1"/>
<rect x="486" y="61.6" width="7.8" height="7.8" fill="#fff" stroke="#767676" stroke-width="1"/>
<path d="M483.50 88.70 H487.30 L485.40 90.80 Z" fill="#444"/>
<rect x="507.5" y="51.8" width="17.8" height="19.4" rx="3.8" fill="#F6F0F6" stroke="#C8C8C8" stroke-width="1"/>
<path d="M512.6 71.4 L516.5 66.2 L519.8 64.8 L521.2 66.4 L519.6 69.6 Z" fill="#ABABAB"/>
<path d="M520.6 64.2 L527.4 56.8 L528.2 57.8 L522 65.4 Z" fill="#A5A5A5"/><path d="M519.6 64.6 L521.8 66.6" stroke="#F1F1F1" stroke-width="0.7"/>
<path d="M526.10 86.50 H529.90 L528.00 88.60 Z" fill="#B8B8B8"/>
<!-- shape fill/outline/effects icons -->
<path d="M535.3 54.2 L538.6 50.9 L542.8 55.1 L539.5 58.4 Z" fill="#fff" stroke="#B8B8B8" stroke-width="1"/><path d="M542.8 55.1 Q544.6 56.4 543.8 58" fill="none" stroke="#B8B8B8" stroke-width="0.9"/>
<path d="M537 50.5 L538.5 52" stroke="#C4C4C4" stroke-width="0.9"/>
<rect x="533.5" y="58.6" width="10.5" height="1.5" fill="#E4DDDD"/>
<path d="M533.7 66 H540 M533.7 66 V73 H542.8 V70" fill="none" stroke="#C4C4C4" stroke-width="0.9"/>
<path d="M537.5 71 L543 65.5 L544.2 66.7 L538.7 72.2 L537.2 72.5 Z" fill="none" stroke="#BBBBBB" stroke-width="0.9"/>
<path d="M534.2 88.6 Q533.6 89.8 535.2 89.9 H541 Q542 89.9 542.6 88.8 L544 85.6 Q544.4 84.4 543 84.2 L538 83.4 Q536.4 83.2 535.8 84.6 Z" fill="#C9C9C9"/>
<path d="M533.8 87.4 L535.6 83.6 Q536 82.8 537 82.8 H542.2 Q543.2 82.8 542.8 83.8 L541.2 87.6 Q540.8 88.4 539.8 88.4 H534.6 Q533.4 88.4 533.8 87.4 Z" fill="#F4EEF4" stroke="#BDBDBD" stroke-width="0.8"/>
<g fill="#B8B8B8">
 <path d="M582.70 54.90 H586.50 L584.60 57.00 Z"/>
 <path d="M599.10 70.60 H602.90 L601.00 72.70 Z"/>
 <path d="M596.40 86.40 H600.20 L598.30 88.50 Z"/>
</g>
<!-- EDITING -->
<circle cx="620.8" cy="54.3" r="2.5" fill="none" stroke="#2F6DB5" stroke-width="1.3"/>
<path d="M619 56.2 L615.6 59.2" stroke="#2F6DB5" stroke-width="1.6"/>
<text x="614" y="71" font-size="6.5" font-family="Liberation Sans" font-weight="bold" fill="#505050">a</text>
<text x="618" y="70.8" font-size="7" font-family="Liberation Sans" font-weight="bold" fill="#8A4FB8">b</text>
<text x="617.6" y="76.2" font-size="6.5" font-family="Liberation Sans" font-weight="bold" fill="#2F6DB5">ac</text>
<path d="M614.6 73 L616.4 74.2" stroke="#2F6DB5" stroke-width="1"/>
<path d="M662.40 70.30 H666.20 L664.30 72.40 Z" fill="#444"/>
<path d="M617.5 81.8 V90 L619.3 88.4 L620.8 91.5 L622.2 90.8 L620.8 87.8 L623.2 87.6 Z" fill="#fff" stroke="#555" stroke-width="0.8"/>
<path d="M650.80 85.80 H654.60 L652.70 87.90 Z" fill="#444"/>
<path d="M716.5 104.8 L719.3 102 L722.1 104.8" fill="none" stroke="#444" stroke-width="1.1"/>
</svg>


<svg class="a" style="left:0;top:505px" width="730" height="25" viewBox="0 505 730 25">
<g fill="none" stroke="#666" stroke-width="0.9">
 <path d="M59.2 517.6 H63 V525 H59.2 Z M63 517.6 H66 L67.8 519.4"/>
 <path d="M64.5 524 L68 520.5 L68.8 521.3 L65.3 524.8 L64.2 525 Z"/>
 <path d="M374.2 521.6 H381.8 M374.2 523.4 H381.8 M374.2 525.2 H381.8" stroke="#777" stroke-width="0.8"/>
</g>
<path d="M376 519.9 L378 517.8 L380 519.9 Z" fill="#666"/>
<path d="M420.2 517.6 H429 V523 H424.2 L422.2 525.6 V523 H420.2 Z" fill="#555"/>
<rect x="482.3" y="515" width="24.8" height="13.6" fill="#D0D0D0"/>
<g fill="none" stroke="#6A6A6A" stroke-width="0.9">
 <rect x="492.2" y="517.4" width="7.4" height="8.4"/>
 <path d="M494 517.4 V525.8 M494 523.6 H499.6"/>
 <rect x="516.6" y="517.4" width="3.8" height="3.4" rx="0.6"/><rect x="522" y="517.4" width="3.8" height="3.4" rx="0.6"/>
 <rect x="516.6" y="522.4" width="3.8" height="3.4" rx="0.6"/><rect x="522" y="522.4" width="3.8" height="3.4" rx="0.6"/>
 <path d="M542.5 518 L546.5 518.8 V526 L542.5 525.2 Z M546.5 518.8 L550.6 518 V525.2 L546.5 526 Z"/>
 <path d="M568.6 517.8 H577.2 M569.4 518.2 V522.2 H576.4 V518.2 M572.9 522.2 V525.5 M570.8 526 H575"/>
 <rect x="708" y="517.7" width="8.8" height="8.5"/>
</g>
<path d="M589.8 521.2 H593.6" stroke="#444" stroke-width="1.3"/>
<path d="M596.5 521.2 H665.2" stroke="#B0B0B0" stroke-width="0.8"/>
<path d="M631 519.6 V522.8" stroke="#B0B0B0" stroke-width="0.7"/>
<rect x="622" y="517.8" width="2.7" height="7.2" fill="#555"/>
<path d="M668 521.2 H673.4 M670.7 518.5 V523.9" stroke="#444" stroke-width="1.3"/>
<g fill="#777">
 <path d="M708.6 518.5 L711.4 518.5 L708.6 521.3 Z"/>
 <path d="M716.2 518.5 L713.4 518.5 L716.2 521.3 Z"/>
 <path d="M708.6 525.4 L711.4 525.4 L708.6 522.6 Z"/>
 <path d="M716.2 525.4 L713.4 525.4 L716.2 522.6 Z"/>
</g>
</svg>

<div class="t1" style="position:absolute;left:8.9px;top:120px;font-size:10.5px;line-height:1;color:#D25A38;font-family:Liberation Sans">1</div>
<div class="t" style="left:306.00px;top:7.00px;font-size:8.4px;color:#FFFFFF;transform:scaleX(0.945)">SIPOC.pptx  -  PowerPoint (Trial)</div>
<div class="t" style="left:564.00px;top:7.00px;font-size:8.4px;color:#FFFFFF;transform:scaleX(0.963)">Sign in</div>
<div class="t" style="left:14.80px;top:31.00px;font-size:8.6px;color:#FFFFFF;transform:scaleX(0.867)">File</div>
<div class="t" style="left:52.10px;top:31.00px;font-size:8.6px;color:#B7472A;transform:scaleX(0.959)">Home</div>
<div class="t" style="left:94.30px;top:31.00px;font-size:8.6px;color:#FFFFFF;transform:scaleX(0.891)">Insert</div>
<div class="t" style="left:135.00px;top:31.00px;font-size:8.6px;color:#FFFFFF;transform:scaleX(0.890)">Design</div>
<div class="t" style="left:179.00px;top:31.00px;font-size:8.6px;color:#FFFFFF;transform:scaleX(0.966)">Transitions</div>
<div class="t" style="left:238.70px;top:31.00px;font-size:8.6px;color:#FFFFFF;transform:scaleX(0.997)">Animations</div>
<div class="t" style="left:300.50px;top:31.00px;font-size:8.6px;color:#FFFFFF;transform:scaleX(0.902)">Slide Show</div>
<div class="t" style="left:359.70px;top:31.00px;font-size:8.6px;color:#FFFFFF;transform:scaleX(0.873)">Review</div>
<div class="t" style="left:404.80px;top:31.00px;font-size:8.6px;color:#FFFFFF;transform:scaleX(0.893)">View</div>
<div class="t" style="left:454.20px;top:31.00px;font-size:8.6px;color:#FFFFFF;transform:scaleX(0.979)">Tell me what you want to do</div>
<div class="t" style="left:661.00px;top:31.00px;font-size:8.4px;color:#FFFFFF;transform:scaleX(0.899)">Share</div>
<div class="t" style="left:7.10px;top:101.00px;font-size:8.2px;color:#5A5A5A;transform:scaleX(0.955)">Clipboard</div>
<div class="t" style="left:93.20px;top:101.00px;font-size:8.2px;color:#5A5A5A;transform:scaleX(0.892)">Slides</div>
<div class="t" style="left:213.50px;top:101.00px;font-size:8.2px;color:#5A5A5A;transform:scaleX(0.807)">Font</div>
<div class="t" style="left:347.20px;top:101.00px;font-size:8.2px;color:#5A5A5A;transform:scaleX(0.931)">Paragraph</div>
<div class="t" style="left:502.80px;top:101.00px;font-size:8.2px;color:#5A5A5A;transform:scaleX(0.968)">Drawing</div>
<div class="t" style="left:628.60px;top:101.00px;font-size:8.2px;color:#5A5A5A;transform:scaleX(0.969)">Editing</div>
<div class="t" style="left:8.60px;top:76.00px;font-size:8.2px;color:#9E9E9E;transform:scaleX(0.889)">Paste</div>
<div class="t" style="left:69.00px;top:76.00px;font-size:8.2px;color:#3F3F3F;transform:scaleX(0.972)">New</div>
<div class="t" style="left:65.30px;top:86.00px;font-size:8.2px;color:#3F3F3F;transform:scaleX(0.944)">Slide</div>
<div class="t" style="left:106.80px;top:53.00px;font-size:8.2px;color:#3F3F3F;transform:scaleX(0.976)">Layout</div>
<div class="t" style="left:106.80px;top:69.00px;font-size:8.2px;color:#3F3F3F;transform:scaleX(0.850)">Reset</div>
<div class="t" style="left:106.80px;top:84.00px;font-size:8.2px;color:#3F3F3F;transform:scaleX(0.940)">Section</div>
<div class="t" style="left:441.80px;top:76.00px;font-size:8.2px;color:#3F3F3F;transform:scaleX(0.918)">Shapes</div>
<div class="t" style="left:470.90px;top:76.00px;font-size:8.2px;color:#3F3F3F;transform:scaleX(0.964)">Arrange</div>
<div class="t" style="left:506.20px;top:76.00px;font-size:8.2px;color:#9E9E9E;transform:scaleX(0.943)">Quick</div>
<div class="t" style="left:503.50px;top:87.00px;font-size:8.2px;color:#9E9E9E;transform:scaleX(0.986)">Styles</div>
<div class="t" style="left:546.20px;top:52.00px;font-size:8.2px;color:#9E9E9E;transform:scaleX(0.957)">Shape Fill</div>
<div class="t" style="left:546.20px;top:68.00px;font-size:8.2px;color:#9E9E9E;transform:scaleX(0.982)">Shape Outline</div>
<div class="t" style="left:546.20px;top:84.00px;font-size:8.2px;color:#9E9E9E;transform:scaleX(0.960)">Shape Effects</div>
<div class="t" style="left:628.00px;top:53.00px;font-size:8.2px;color:#3F3F3F;transform:scaleX(0.904)">Find</div>
<div class="t" style="left:628.00px;top:68.00px;font-size:8.2px;color:#3F3F3F;transform:scaleX(0.889)">Replace</div>
<div class="t" style="left:628.00px;top:84.00px;font-size:8.2px;color:#3F3F3F;transform:scaleX(0.869)">Select</div>
<div class="t" style="left:6.60px;top:518.00px;font-size:7.6px;color:#4A4A4A;transform:scaleX(1.014)">Slide 1 of 1</div>
<div class="t" style="left:80.00px;top:518.00px;font-size:7.6px;color:#4A4A4A;transform:scaleX(0.976)">German (Germany)</div>
<div class="t" style="left:385.80px;top:518.00px;font-size:7.6px;color:#4A4A4A;transform:scaleX(0.993)">Notes</div>
<div class="t" style="left:432.00px;top:518.00px;font-size:7.6px;color:#4A4A4A;transform:scaleX(0.981)">Comments</div>
<div class="t" style="left:684.20px;top:518.00px;font-size:7.6px;color:#4A4A4A;transform:scaleX(0.939)">78%</div>
<div id="bl" class="a"></div><div id="br" class="a"></div><div id="bb" class="a"></div>
</body></html>
